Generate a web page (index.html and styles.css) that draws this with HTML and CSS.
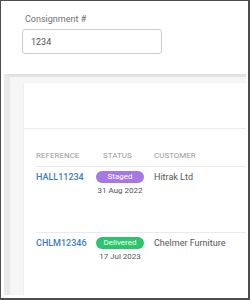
FILE: index.html
```html
<!DOCTYPE html>
<html lang="en">
<head>
    <meta charset="UTF-8">
    <meta name="viewport" content="width=device-width, initial-scale=1.0">
    <title>Consignments</title>
    <link rel="stylesheet" href="styles.css">
</head>
<body>
    <div class="frame">
        <div class="search">
            <label class="search-label" for="consignment">Consignment #</label>
            <input type="text" class="search-input" id="consignment" value="1234" readonly>
        </div>
        <div class="panel">
            <div class="card">
                <div class="card-head"></div>
                <div class="table">
                    <div class="row head">
                        <div class="cell">REFERENCE</div>
                        <div class="cell status">STATUS</div>
                        <div class="cell customer">CUSTOMER</div>
                    </div>
                    <div class="row">
                        <div class="cell"><a class="ref" href="#">HALL11234</a></div>
                        <div class="cell status">
                            <span class="badge staged">Staged</span>
                            <span class="date">31 Aug 2022</span>
                        </div>
                        <div class="cell customer">Hitrak Ltd</div>
                    </div>
                    <div class="row">
                        <div class="cell"><a class="ref" href="#">CHLM12346</a></div>
                        <div class="cell status">
                            <span class="badge delivered">Delivered</span>
                            <span class="date">17 Jul 2023</span>
                        </div>
                        <div class="cell customer">Chelmer Furniture</div>
                    </div>
                </div>
            </div>
        </div>
    </div>
</body>
</html>
```
FILE: styles.css
```css
body {
    margin: 0;
    background-color: #ffffff;
    font-family: Roboto, 'Liberation Sans', sans-serif;
}
.frame {
    display: flex;
    flex-direction: column;
    box-sizing: border-box;
    width: 250px;
    height: 300px;
    border-style: solid;
    border-color: #4d4d4d;
    border-width: 1px 2px 2px 1px;
    overflow: hidden;
}
.search {
    display: flex;
    flex-direction: column;
    align-items: flex-start;
    padding: 12px 0 0 21px;
}
.search-label {
    margin-left: 3px;
    margin-bottom: 4px;
    font-size: 9px;
    line-height: 12px;
    color: #707070;
}
.search-input {
    box-sizing: border-box;
    width: 140px;
    height: 25px;
    padding: 0 8px;
    border: 1px solid #cccccc;
    border-radius: 3px;
    font-family: inherit;
    font-size: 9px;
    color: #555555;
    outline: none;
}
.panel {
    flex: 1;
    display: flex;
    margin: 20px 2px 3px 3px;
    padding: 6px 0 0 13px;
    background-color: #f6f6f6;
    border-top: 3px solid #e3e3e3;
    border-left: 6px solid #e9e9e9;
    min-height: 0;
}
.card {
    flex: 1;
    background-color: #ffffff;
    border-left: 1px solid #efefef;
    overflow: hidden;
}
.card-head {
    height: 45px;
    border-bottom: 1px solid #eeeeee;
}
.table {
    padding: 22px 0 0 12px;
}
.row {
    display: grid;
    grid-template-columns: 60px 48px 1fr;
    align-items: start;
    height: 65px;
    padding-top: 4px;
    border-top: 1px solid #eaeaea;
    box-sizing: border-box;
    font-size: 9px;
    line-height: 12px;
    color: #555555;
}
.row.head {
    height: auto;
    padding: 0 0 5px;
    border-top: none;
    border-bottom: 1px solid #eaeaea;
    font-size: 8px;
    line-height: 10px;
    color: #9a9a9a;
}
.row.head + .row {
    border-top: none;
    padding-top: 4px;
}
.cell.status {
    display: flex;
    flex-direction: column;
    align-items: center;
}
.row.head .cell.status {
    align-items: flex-start;
    padding-left: 7px;
}
.cell.customer {
    padding-left: 10px;
}
.ref {
    color: #3d7cc6;
    font-weight: 500;
    text-decoration: none;
}
.badge {
    box-sizing: border-box;
    width: 48px;
    height: 12px;
    border-radius: 6px;
    font-size: 8px;
    line-height: 12px;
    text-align: center;
    color: #ffffff;
}
.staged {
    background-color: #a678e3;
}
.delivered {
    background-color: #2cc46c;
}
.date {
    margin-top: 3px;
    font-size: 8px;
    line-height: 10px;
    color: #555555;
}
```
